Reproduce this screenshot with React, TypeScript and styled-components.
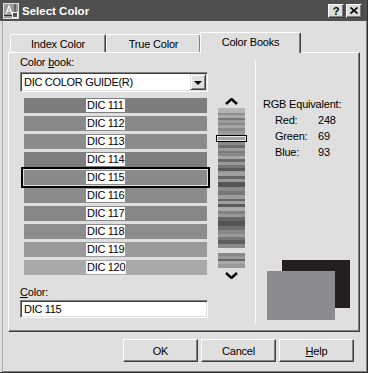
import React from 'react';
import styled, {createGlobalStyle} from 'styled-components';

const GlobalStyle = createGlobalStyle`
  html, body {
    margin: 0;
    padding: 0;
    background: #dfdfdf;
  }
  body {
    font-family: "Liberation Sans", Arial, sans-serif;
    font-size: 11px;
    color: #000;
  }
`;

const Window = styled.div`
  width: 368px;
  height: 373px;
  box-sizing: border-box;
  display: flex;
  flex-direction: column;
  background: #dfdfdf;
  border-right: 1px solid #303030;
  border-bottom: 1px solid #303030;
  box-shadow: inset -1px -1px #808080;
`;

const TitleBar = styled.div`
  height: 21px;
  flex: none;
  display: flex;
  align-items: center;
  padding: 0 5px 0 3px;
  background: #4f4f4f;
`;

const Title = styled.span`
  margin-left: 3px;
  color: #fff;
  font-weight: bold;
  font-size: 11.5px;
`;

const CaptionButtons = styled.div`
  margin-left: auto;
  display: flex;
  gap: 2px;
`;

const CaptionButton = styled.div`
  width: 16px;
  height: 14px;
  box-sizing: border-box;
  display: flex;
  align-items: center;
  justify-content: center;
  background: #dcdcdc;
  border: 1px solid;
  border-color: #fff #404040 #404040 #fff;
  box-shadow: inset -1px -1px #808080;
  font-weight: bold;
  font-size: 11px;
  line-height: 12px;
`;

const Body = styled.div`
  flex: 1;
  display: flex;
  flex-direction: column;
  padding: 11px 7px 0 8px;
  box-shadow: inset 2px 0 #dfdfdf, inset 3px 0 #a8a8a8;
`;

const TabStrip = styled.div`
  height: 20px;
  display: flex;
  align-items: flex-end;
  padding-left: 2px;
  position: relative;
  z-index: 1;
`;

const Tab = styled.div<{ $active?: boolean; $w: number }>`
  width: ${p => p.$w}px;
  height: ${p => (p.$active ? 21 : 18)}px;
  margin-left: ${p => (p.$active ? -1 : 0)}px;
  margin-bottom: ${p => (p.$active ? -1 : 0)}px;
  padding-bottom: ${p => (p.$active ? 2 : 0)}px;
  box-sizing: border-box;
  display: flex;
  align-items: center;
  justify-content: center;
  background: #dfdfdf;
  border-top: 1px solid #fff;
  border-left: 1px solid #fff;
  border-right: 1px solid #404040;
  box-shadow: inset -1px 0 #808080;
  border-radius: 2px 2px 0 0;
  letter-spacing: -0.2px;
`;

const Panel = styled.div`
  height: 280px;
  box-sizing: border-box;
  display: flex;
  padding: 3px 7px 0 11px;
  border: 1px solid;
  border-color: #fff #404040 #404040 #fff;
  box-shadow: inset -1px -1px #808080;
`;

const LeftCol = styled.div`
  width: 189px;
  flex: none;
  display: flex;
  flex-direction: column;
`;

const FieldLabel = styled.div<{ $gap?: number }>`
  height: 12px;
  line-height: 12px;
  margin-top: ${p => p.$gap || 0}px;
  letter-spacing: -0.2px;

  u {
    text-decoration: underline;
    text-underline-offset: 1px;
  }
`;

const Sunken = styled.div<{ $h: number; $gap: number }>`
  width: 188px;
  height: ${p => p.$h}px;
  margin-top: ${p => p.$gap}px;
  box-sizing: border-box;
  display: flex;
  align-items: center;
  padding: 1px;
  background: #fff;
  border: 1px solid;
  border-color: #808080 #fff #fff #808080;
  box-shadow: inset 1px 1px #404040, inset -1px -1px #dfdfdf;
  letter-spacing: -0.3px;
`;

const FieldText = styled.span`
  padding-left: 2px;
  line-height: 14px;
`;

const ComboButton = styled.div`
  margin-left: auto;
  width: 16px;
  height: 16px;
  box-sizing: border-box;
  display: flex;
  align-items: center;
  justify-content: center;
  background: #dfdfdf;
  border: 1px solid;
  border-color: #dfdfdf #404040 #404040 #dfdfdf;
  box-shadow: inset 1px 1px #fff, inset -1px -1px #808080;
`;

const Triangle = styled.div`
  width: 0;
  height: 0;
  border-left: 4px solid transparent;
  border-right: 4px solid transparent;
  border-top: 4px solid #000;
  margin-top: 1px;
`;

const List = styled.div`
  margin-top: 6px;
  padding: 0 2px 0 4px;
  display: flex;
  flex-direction: column;
  gap: 3px;
`;

const Row = styled.div<{ $shade: string; $selected?: boolean }>`
  height: 15px;
  display: flex;
  align-items: center;
  padding-left: 62px;
  background: ${p => p.$shade};
  outline: ${p => (p.$selected ? '2px solid #000' : 'none')};
  outline-offset: 1px;
`;

const RowLabel = styled.span`
  background: #fff;
  height: 13px;
  line-height: 13px;
  padding: 0 1px;
  letter-spacing: -0.3px;
`;

const SliderCol = styled.div`
  width: 31px;
  flex: none;
  margin-left: 7px;
  padding-top: 42px;
  display: flex;
  flex-direction: column;
  align-items: center;
`;

const StripeWrap = styled.div<{ $gap: number }>`
  position: relative;
  margin-top: ${p => p.$gap}px;
  display: flex;
`;

const Thumb = styled.div`
  position: absolute;
  top: 27px;
  left: -2px;
  width: 31px;
  height: 7px;
  box-sizing: border-box;
  border: 1px solid #000;
  background: #a4a4a4;
  box-shadow: inset 0 0 0 1px #e6e6e6;
`;

const Divider = styled.div`
  width: 1px;
  flex: none;
  margin: 5px 0 8px 8px;
  background: #fff;
`;

const RightCol = styled.div`
  flex: 1;
  margin-left: 7px;
  padding-top: 40px;
  display: flex;
  flex-direction: column;
  letter-spacing: -0.2px;
`;

const Heading = styled.div`
  line-height: 16px;
`;

const RgbGrid = styled.div`
  display: grid;
  grid-template-columns: 43px auto;
  padding-left: 12px;
  line-height: 16px;
`;

const Preview = styled.div`
  position: relative;
  margin: auto 0 11px 4px;
  width: 83px;
  height: 60px;
`;

const Swatch = styled.div<{ $color: string; $front?: boolean }>`
  width: 68px;
  height: ${p => (p.$front ? 49 : 48)}px;
  background: ${p => p.$color};
  margin-left: ${p => (p.$front ? 0 : 15)}px;
  ${p => (p.$front ? 'position: absolute; left: 0; top: 11px;' : '')}
`;

const Footer = styled.div`
  display: flex;
  justify-content: flex-end;
  gap: 3px;
  margin-top: 7px;
  padding-right: 6px;
`;

const Button = styled.div`
  width: 75px;
  height: 23px;
  box-sizing: border-box;
  display: flex;
  align-items: center;
  justify-content: center;
  background: #dfdfdf;
  border: 1px solid;
  border-color: #fff #404040 #404040 #fff;
  box-shadow: inset -1px -1px #808080;
  letter-spacing: -0.2px;

  u {
    text-underline-offset: 1px;
  }
`;

const rows = [
  {name: 'DIC 111', shade: '#7d7d7d'},
  {name: 'DIC 112', shade: '#898989'},
  {name: 'DIC 113', shade: '#8c8c8c'},
  {name: 'DIC 114', shade: '#7e7e7e'},
  {name: 'DIC 115', shade: '#8a8a8a'},
  {name: 'DIC 116', shade: '#8b8b8b'},
  {name: 'DIC 117', shade: '#878787'},
  {name: 'DIC 118', shade: '#8d8d8d'},
  {name: 'DIC 119', shade: '#9a9a9a'},
  {name: 'DIC 120', shade: '#a9a9a9'},
];

// band start (px from top of strip) and grey
const mainBands: [number, string][] = [
  [0, '#b4b4b4'], [5, '#8e8e8e'], [7, '#a9a9a9'], [10, '#787878'], [12, '#9b9b9b'],
  [15, '#878787'], [17, '#a4a4a4'], [20, '#8a8a8a'], [23, '#9c9c9c'], [27, '#a3a3a3'],
  [34, '#8a8a8a'], [37, '#6e6e6e'], [40, '#9a9a9a'], [43, '#7a7a7a'], [45, '#888888'],
  [48, '#a6a6a6'], [51, '#6a6a6a'], [54, '#9a9a9a'], [57, '#777777'], [60, '#5a5a5a'],
  [63, '#999999'], [65, '#a0a0a0'], [68, '#666666'], [71, '#999999'], [74, '#555555'],
  [79, '#8a8a8a'], [83, '#777777'], [87, '#9d9d9d'], [91, '#666666'], [93, '#a0a0a0'],
  [96, '#5a5a5a'], [99, '#aaaaaa'], [103, '#808080'], [106, '#999999'], [109, '#666666'],
  [113, '#555555'], [118, '#707070'], [122, '#888888'], [126, '#9a9a9a'], [129, '#777777'],
  [132, '#5e5e5e'], [136, '#8a8a8a'],
];

const tailBands: [number, string][] = [
  [0, '#888888'], [3, '#9a9a9a'], [6, '#666666'], [8, '#aaaaaa'], [11, '#999999'],
];

const Stripes = ({bands, height}: { bands: [number, string][]; height: number }) => (
  <svg width="27" height={height} style={{display: 'block'}}>
    {bands.map(([y, c], i) => {
      const next = i + 1 < bands.length ? bands[i + 1][0] : height;
      return <rect key={i} x="0" y={y} width="27" height={next - y} fill={c}/>;
    })}
  </svg>
);

const Chevron = ({down}: { down?: boolean }) => (
  <svg width="13" height="7" style={{display: 'block'}}>
    <polyline
      points={down ? '1,1 6.5,6 12,1' : '1,6 6.5,1 12,6'}
      fill="none"
      stroke="#000"
      strokeWidth="2.4"
    />
  </svg>
);

const AppIcon = () => (
  <svg width="16" height="16" style={{display: 'block'}}>
    <rect x="0.5" y="0.5" width="15" height="15" fill="#9a9a9a" stroke="#e0e0e0"/>
    <path d="M3 11 L6 3 L9 11 M4.2 8 H7.8" fill="none" stroke="#fff" strokeWidth="1.2"/>
    <line x1="1" y1="12.5" x2="9" y2="12.5" stroke="#303030"/>
    <rect x="9.5" y="9.5" width="5" height="5" fill="#4f4f4f" stroke="#fff"/>
    <line x1="12" y1="1" x2="12" y2="9" stroke="#303030"/>
  </svg>
);

const App = (): JSX.Element => {
  return (
    <>
      <GlobalStyle/>
      <Window>
        <TitleBar>
          <AppIcon/>
          <Title>Select Color</Title>
          <CaptionButtons>
            <CaptionButton>?</CaptionButton>
            <CaptionButton>
              <svg width="8" height="7">
                <path d="M0.5 0.5 L7.5 6.5 M7.5 0.5 L0.5 6.5" stroke="#000" strokeWidth="1.6"/>
              </svg>
            </CaptionButton>
          </CaptionButtons>
        </TitleBar>

        <Body>
          <TabStrip>
            <Tab $w={96}>Index Color</Tab>
            <Tab $w={95}>True Color</Tab>
            <Tab $w={101} $active>Color Books</Tab>
          </TabStrip>

          <Panel>
            <LeftCol>
              <FieldLabel>Color <u>b</u>ook:</FieldLabel>
              <Sunken $h={20} $gap={4}>
                <FieldText>DIC COLOR GUIDE(R)</FieldText>
                <ComboButton><Triangle/></ComboButton>
              </Sunken>
              <List>
                {rows.map(r => (
                  <Row key={r.name} $shade={r.shade} $selected={r.name === 'DIC 115'}>
                    <RowLabel>{r.name}</RowLabel>
                  </Row>
                ))}
              </List>
              <FieldLabel $gap={11}><u>C</u>olor:</FieldLabel>
              <Sunken $h={18} $gap={2}>
                <FieldText>DIC 115</FieldText>
              </Sunken>
            </LeftCol>

            <SliderCol>
              <Chevron/>
              <StripeWrap $gap={3}>
                <Stripes bands={mainBands} height={140}/>
                <Thumb/>
              </StripeWrap>
              <StripeWrap $gap={5}>
                <Stripes bands={tailBands} height={15}/>
              </StripeWrap>
              <StripeWrap $gap={4}>
                <Chevron down/>
              </StripeWrap>
            </SliderCol>

            <Divider/>

            <RightCol>
              <Heading>RGB Equivalent:</Heading>
              <RgbGrid>
                <span>Red:</span><span>248</span>
                <span>Green:</span><span>69</span>
                <span>Blue:</span><span>93</span>
              </RgbGrid>
              <Preview>
                <Swatch $color="#231f20"/>
                <Swatch $color="#8c8c8e" $front/>
              </Preview>
            </RightCol>
          </Panel>

          <Footer>
            <Button>OK</Button>
            <Button>Cancel</Button>
            <Button><u>H</u>elp</Button>
          </Footer>
        </Body>
      </Window>
    </>
  );
};

export default App;
